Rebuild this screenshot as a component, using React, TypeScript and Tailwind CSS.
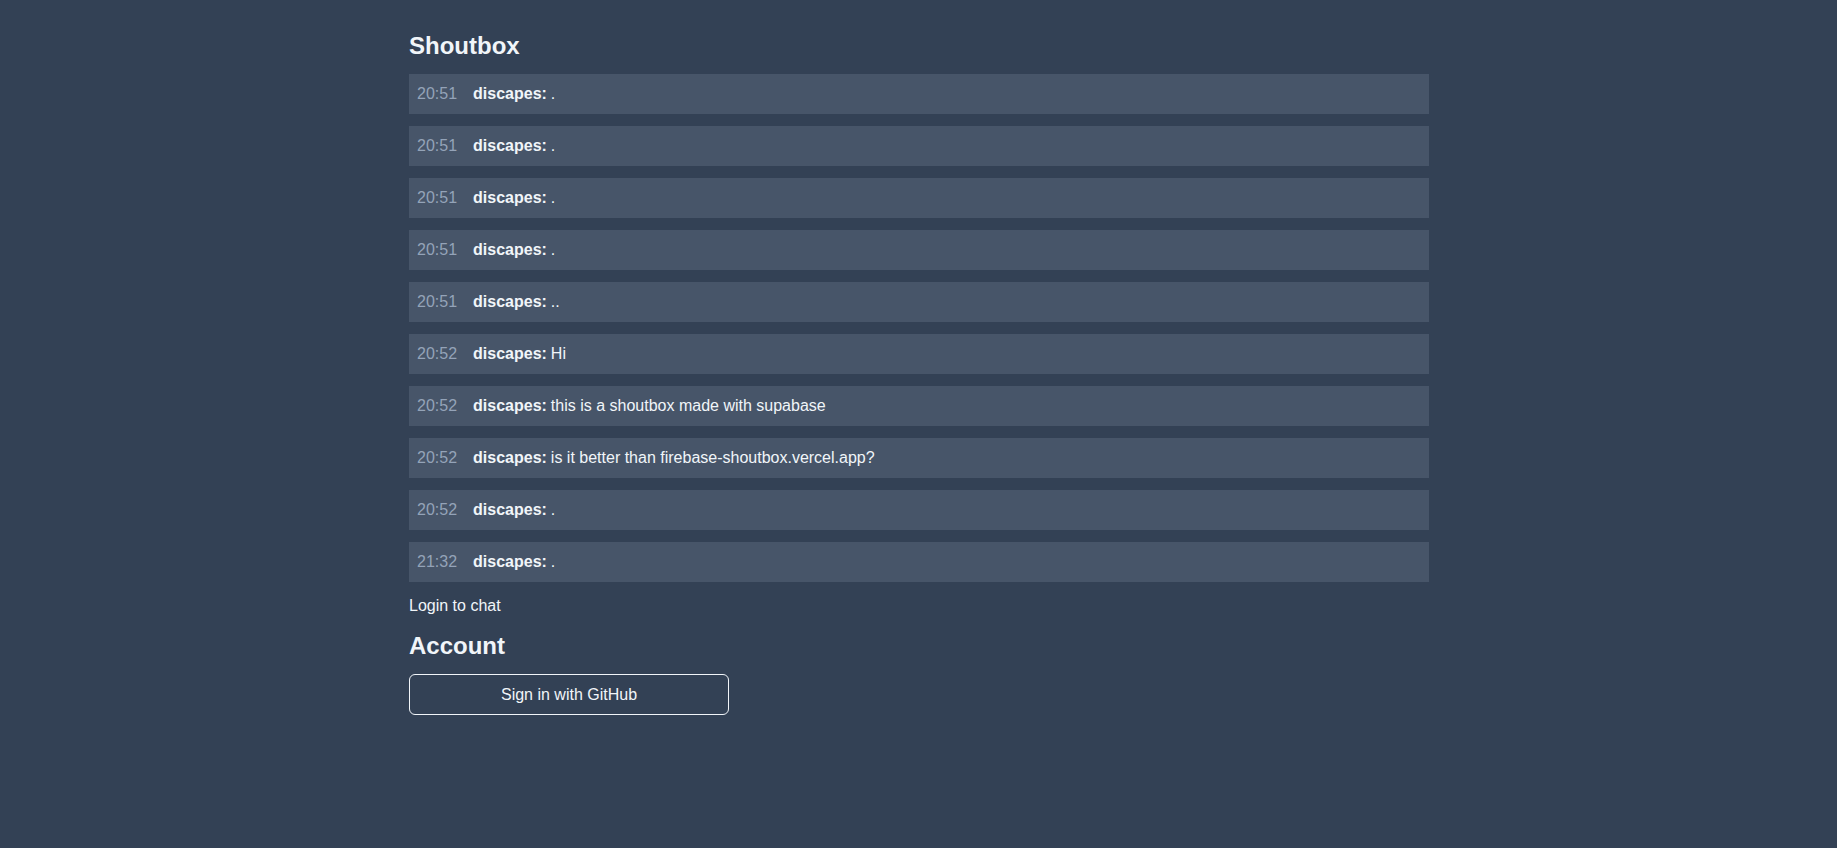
const messages = [
  { time: '20:51', user: 'discapes', text: '.' },
  { time: '20:51', user: 'discapes', text: '.' },
  { time: '20:51', user: 'discapes', text: '.' },
  { time: '20:51', user: 'discapes', text: '.' },
  { time: '20:51', user: 'discapes', text: '..' },
  { time: '20:52', user: 'discapes', text: 'Hi' },
  { time: '20:52', user: 'discapes', text: 'this is a shoutbox made with supabase' },
  { time: '20:52', user: 'discapes', text: 'is it better than firebase-shoutbox.vercel.app?' },
  { time: '20:52', user: 'discapes', text: '.' },
  { time: '21:32', user: 'discapes', text: '.' },
];

export default function App() {
  return (
    <div
      className="min-h-screen bg-[#334155] text-[#f1f5f9]"
      style={{ fontFamily: '"Liberation Sans", Arial, sans-serif' }}
    >
      <div className="w-[1021px] mx-auto pl-px pt-[30px]">
        {/* Shoutbox */}
        <h2 className="text-2xl font-bold mb-3">Shoutbox</h2>
        <div>
          {messages.map((m, i) => (
            <div key={i} className="flex items-center bg-[#475569] px-2 py-2 mb-3 leading-6">
              <span className="text-[#94a3b8] mr-4">{m.time}</span>
              <span className="font-bold mr-1">{m.user}:</span>
              <span>{m.text}</span>
            </div>
          ))}
        </div>
        <p className="leading-6">Login to chat</p>

        {/* Account */}
        <h2 className="text-2xl font-bold mt-3 mb-3">Account</h2>
        <button className="w-[320px] h-[41px] border border-[#f1f5f9] rounded-md text-[#f1f5f9]">
          Sign in with GitHub
        </button>
      </div>
    </div>
  );
}
